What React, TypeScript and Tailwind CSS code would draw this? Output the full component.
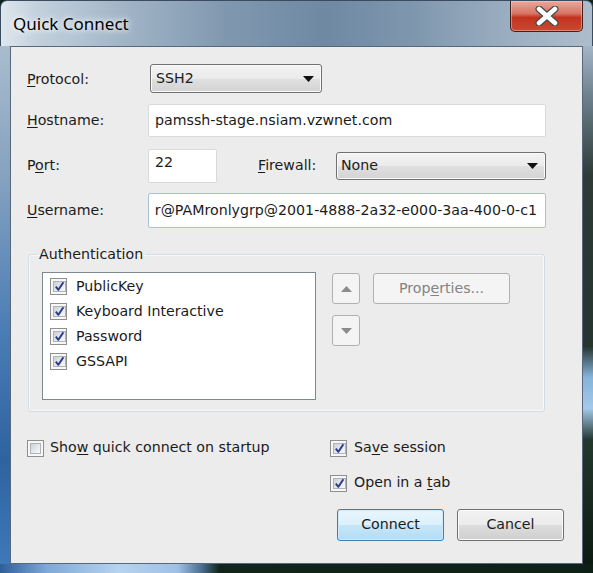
import React from "react";

function Arrow() {
  return (
    <svg width="11" height="6" viewBox="0 0 11 6">
      <polygon points="0,0 11,0 5.5,6" fill="#111" />
    </svg>
  );
}

function Check({ checked }: { checked: boolean }) {
  return (
    <span className="w-[17px] h-[17px] shrink-0 border border-[#8e8f8f] bg-[#f7f7f7] p-[2px] flex">
      <span className="flex-1 border border-[#aeb3b9] bg-[linear-gradient(135deg,#cbd0d6,#e9ebee_60%,#f8f8f8)] flex items-center justify-center">
        {checked && (
          <svg width="11" height="11" viewBox="0 0 11 11">
            <path d="M1.8 5.6 L4.4 8.8 L9.4 1.2" fill="none" stroke="#2c3c8c" strokeWidth="2" strokeLinejoin="round" />
          </svg>
        )}
      </span>
    </span>
  );
}

function U({ children }: { children: React.ReactNode }) {
  return <span className="underline decoration-1 underline-offset-[2px]">{children}</span>;
}

export default function App() {
  return (
    <div className="w-[593px] h-[573px] flex flex-col overflow-hidden bg-[#0f2418] font-['DejaVu_Sans',sans-serif] text-[14.2px] text-[#1b1b1b]">
      {/* title bar */}
      <div className="h-[46px] shrink-0 flex items-start rounded-t-[7px] border-t border-x border-[#3a4c5e] bg-[linear-gradient(90deg,#dfe7ee_0%,#c3d1dd_6%,#a3b6c8_20%,#8098af_38%,#6f89a3_55%,#7f97ae_70%,#9aadc0_85%,#aebdcb_100%)]">
        <div className="pl-[12px] pt-[11px] text-[17px] leading-[24px] font-['Noto_Sans',sans-serif] text-black [text-shadow:0_0_10px_#ffffff,0_0_5px_#ffffff]">
          Quick Connect
        </div>
        <div className="ml-auto mr-[9px] w-[73px] h-[31px] rounded-b-[5px] border border-t-0 border-[#42201a] bg-[linear-gradient(#e8aa9e,#d77463_42%,#c3321f_55%,#c84a31)] shadow-[inset_0_0_0_1px_rgba(255,210,200,0.45)] flex items-center justify-center">
          <svg width="28" height="20" viewBox="0 0 28 20">
            <path d="M6 3 L22 17 M22 3 L6 17" stroke="#4a4a4a" strokeWidth="7" strokeLinecap="round" />
            <path d="M6 3 L22 17 M22 3 L6 17" stroke="#ffffff" strokeWidth="4.5" strokeLinecap="round" />
          </svg>
        </div>
      </div>

      {/* body */}
      <div className="flex-1 flex">
        <div className="w-[10px] bg-[linear-gradient(180deg,#a9bccd,#86a2bf_25%,#4a7db5_55%,#2f63a0_80%,#3e78b8)]" />
        <div className="flex-1 border border-[#56687a] bg-[#ececec] flex flex-col pl-[16px] pt-[17px]">
          {/* Protocol */}
          <div className="flex items-center h-[29px]">
            <div className="w-[121px] pt-[2px]"><U>P</U>rotocol:</div>
            <div className="ml-[2px] w-[172px] h-[29px] rounded-[3px] border border-[#707070] bg-[linear-gradient(#f3f3f3,#ebebeb_50%,#e0e0e0_50%,#d3d3d3)] shadow-[inset_0_0_0_1px_#fafafa] flex items-center justify-between pl-[5px] pr-[7px]">
              <span>SSH2</span>
              <Arrow />
            </div>
          </div>
          {/* Hostname */}
          <div className="flex items-center h-[33px] mt-[11px]">
            <div className="w-[121px]"><U>H</U>ostname:</div>
            <div className="w-[398px] h-[33px] bg-white border border-[#dadada] rounded-[2px] flex items-center pl-[6px]">
              pamssh-stage.nsiam.vzwnet.com
            </div>
          </div>
          {/* Port / Firewall */}
          <div className="flex items-center h-[34px] mt-[12px]">
            <div className="w-[121px]">P<U>o</U>rt:</div>
            <div className="w-[69px] h-[34px] bg-white border border-[#dadada] rounded-[2px] pl-[6px] pt-[2px]">22</div>
            <div className="ml-[41px] w-[78px]"><U>F</U>irewall:</div>
            <div className="w-[210px] h-[28px] rounded-[3px] border border-[#707070] bg-[linear-gradient(#f3f3f3,#ebebeb_50%,#e0e0e0_50%,#d3d3d3)] shadow-[inset_0_0_0_1px_#fafafa] flex items-center justify-between pl-[4px] pr-[7px]">
              <span>None</span>
              <Arrow />
            </div>
          </div>
          {/* Username */}
          <div className="flex items-center h-[35px] mt-[10px]">
            <div className="w-[121px]"><U>U</U>sername:</div>
            <div className="w-[398px] h-[35px] bg-white border border-[#a9c1da] rounded-[2px] flex items-center justify-end pr-[8px] overflow-hidden whitespace-nowrap">
              <span>r@PAMronlygrp@2001-4888-2a32-e000-3aa-400-0-c1</span>
            </div>
          </div>

          {/* Authentication */}
          <fieldset className="mt-[18px] ml-[1px] w-[517px] border border-[#d3dce3] rounded-[3px] shadow-[inset_0_0_0_1px_#f8f8f8] pb-[11px]">
            <legend className="ml-[8px] px-[2px] leading-[17px]">Authentication</legend>
            <div className="flex items-start mt-[9px] ml-[13px]">
              <div className="w-[274px] h-[128px] bg-white border border-[#7f8790] flex flex-col pl-[7px] pt-[1px]">
                {["PublicKey", "Keyboard Interactive", "Password", "GSSAPI"].map((t) => (
                  <div key={t} className="h-[25px] flex items-center gap-[9px]">
                    <Check checked />
                    <span>{t}</span>
                  </div>
                ))}
              </div>
              <div className="ml-[16px] flex flex-col gap-[11px] mt-[1px]">
                <div className="w-[28px] h-[31px] rounded-[3px] border border-[#adb2b5] bg-[#f4f4f4] flex items-center justify-center">
                  <svg width="11" height="6" viewBox="0 0 11 6"><polygon points="0,6 11,6 5.5,0" fill="#8b8b8b" /></svg>
                </div>
                <div className="w-[28px] h-[31px] rounded-[3px] border border-[#adb2b5] bg-[#f4f4f4] flex items-center justify-center">
                  <svg width="11" height="6" viewBox="0 0 11 6"><polygon points="0,0 11,0 5.5,6" fill="#8b8b8b" /></svg>
                </div>
              </div>
              <div className="ml-[13px] mt-[1px] w-[137px] h-[31px] rounded-[3px] border border-[#adb2b5] bg-[#f4f4f4] text-[#838383] flex items-center justify-center">
                <span>Prop<U>e</U>rties...</span>
              </div>
            </div>
          </fieldset>

          {/* bottom */}
          <div className="flex mt-[26px]">
            <div className="w-[303px] h-[20px] flex items-center gap-[6px]">
              <Check checked={false} />
              <span>Sho<U>w</U> quick connect on startup</span>
            </div>
            <div className="flex flex-col">
              <div className="h-[20px] flex items-center gap-[7px]">
                <Check checked />
                <span>Sa<U>v</U>e session</span>
              </div>
              <div className="h-[20px] mt-[15px] flex items-center gap-[7px]">
                <Check checked />
                <span>Open in a <U>t</U>ab</span>
              </div>
              <div className="flex gap-[13px] mt-[16px] ml-[7px]">
                <div className="w-[107px] h-[32px] rounded-[3px] border border-[#3c7fb1] bg-[linear-gradient(#e9f5fc,#dcf0fb_50%,#c6e6f8_50%,#b3dcf3)] shadow-[inset_0_0_0_1px_#cdeafa] flex items-center justify-center">
                  Connect
                </div>
                <div className="w-[107px] h-[32px] rounded-[3px] border border-[#707070] bg-[linear-gradient(#f2f2f2,#ebebeb_50%,#dddddd_50%,#cfcfcf)] shadow-[inset_0_0_0_1px_#fbfbfb] flex items-center justify-center">
                  Cancel
                </div>
              </div>
            </div>
          </div>
        </div>
        <div className="w-[10px] bg-[linear-gradient(180deg,#a4b5c6,#6c7f8c_10%,#2d3a36_25%,#26352f_58%,#86b4dc_64%,#a4c8e8_70%,#243830_76%,#0c1a12)]" />
      </div>
      <div className="h-[9px] shrink-0 bg-[linear-gradient(90deg,#2f5f98,#7fa9d8_8%,#b7d3ef_20%,#9fc0e4_30%,#4a6e8f_34%,#10261a_37%,#0d2016_100%)]" />
    </div>
  );
}
